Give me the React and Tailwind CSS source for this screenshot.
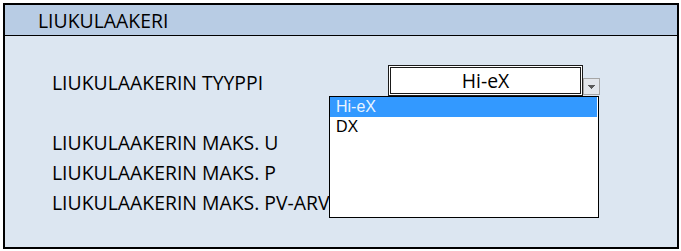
export default function App() {
  const calibri = { fontFamily: '"Open Sans", "Noto Sans", sans-serif' };
  return (
    <div className="w-[681px] h-[251px] bg-white pt-[3px] pl-[3px] text-black" style={calibri}>
      <div className="relative w-[676px] h-[246px] border-2 border-black bg-[#DCE6F1]">
        <div className="h-[31px] border-b border-black bg-[#B8CCE4] pl-[33px] pt-[2px] flex items-center text-[19.4px] leading-none">
          LIUKULAAKERI
        </div>
        <div className="pl-[47px] pt-[31px] text-[19.4px] leading-none">
          <div className="h-[30px] flex items-start">
            <div className="w-[336px] h-[30px] pt-[1px] flex items-center">LIUKULAAKERIN TYYPPI</div>
            <div className="-mt-[2px] w-[195px] h-[31px] border-[3px] border-double border-[#1a1a1a] bg-white flex items-center justify-center">
              Hi-eX
            </div>
            <div className="mt-[11px] w-[17px] h-[17px] border border-[#A6A6A6] bg-[#E3E6EB] flex items-center justify-center">
              <svg width="7" height="4" viewBox="0 0 7 4" shapeRendering="crispEdges">
                <rect x="0" y="0" width="7" height="1" fill="#5a5a5a" />
                <rect x="1" y="1" width="5" height="1" fill="#5a5a5a" />
                <rect x="2" y="2" width="3" height="1" fill="#5a5a5a" />
                <rect x="3" y="3" width="1" height="1" fill="#5a5a5a" />
              </svg>
            </div>
          </div>
          <div className="h-[30px]" />
          <div className="h-[30px] pt-[1px] flex items-center">LIUKULAAKERIN MAKS. U</div>
          <div className="h-[30px] pt-[1px] flex items-center">LIUKULAAKERIN MAKS. P</div>
          <div className="h-[30px] pt-[1px] flex items-center">LIUKULAAKERIN MAKS. PV-ARVO</div>
        </div>
        <div
          className="absolute left-[324px] top-[91px] w-[270px] h-[122px] border border-black bg-white text-[16px] leading-none"
          style={{ fontFamily: '"Liberation Sans", Arial, sans-serif' }}
        >
          <div className="h-[20px] w-[267px] bg-[#3399FF] text-[#EAF4FF] pl-[6px] flex items-center">Hi-eX</div>
          <div className="h-[20px] pl-[6px] flex items-center">DX</div>
        </div>
      </div>
    </div>
  );
}
